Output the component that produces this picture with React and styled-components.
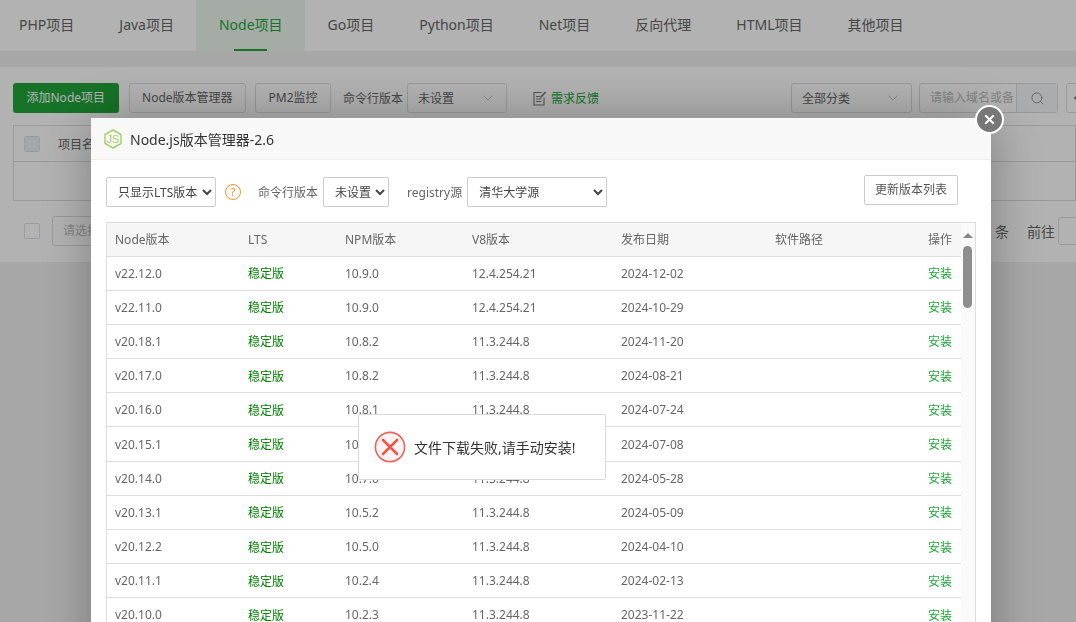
import React from 'react';
import styled, {createGlobalStyle} from 'styled-components';
import {ChevronDown, Search, X, ArrowLeft} from 'lucide-react';

const GlobalStyle = createGlobalStyle`
    html, body {
        margin: 0;
        height: 622px;
        overflow: hidden;
        background: #f0f0f0;
        font-family: "Noto Sans", "Noto Sans CJK SC", sans-serif;
        color: #666;
    }
    * {
        box-sizing: border-box;
    }
`

const tabs = ['PHP项目', 'Java项目', 'Node项目', 'Go项目', 'Python项目', 'Net项目', '反向代理', 'HTML项目', '其他项目'];

const versions = [
    ['v22.12.0', '10.9.0', '12.4.254.21', '2024-12-02'],
    ['v22.11.0', '10.9.0', '12.4.254.21', '2024-10-29'],
    ['v20.18.1', '10.8.2', '11.3.244.8', '2024-11-20'],
    ['v20.17.0', '10.8.2', '11.3.244.8', '2024-08-21'],
    ['v20.16.0', '10.8.1', '11.3.244.8', '2024-07-24'],
    ['v20.15.1', '10.7.0', '11.3.244.8', '2024-07-08'],
    ['v20.14.0', '10.7.0', '11.3.244.8', '2024-05-28'],
    ['v20.13.1', '10.5.2', '11.3.244.8', '2024-05-09'],
    ['v20.12.2', '10.5.0', '11.3.244.8', '2024-04-10'],
    ['v20.11.1', '10.2.4', '11.3.244.8', '2024-02-13'],
    ['v20.10.0', '10.2.3', '11.3.244.8', '2023-11-22'],
];

const NodeLogo = () => (
    <svg width="18" height="20" viewBox="0 0 18 20">
        <path d="M9 1 L17 5.5 V14.5 L9 19 L1 14.5 V5.5 Z" fill="none" stroke="#a5d06f" strokeWidth="1.5" strokeLinejoin="round"/>
        <text x="9" y="14" textAnchor="middle" fontSize="11" fill="#a5d06f" fontFamily="Liberation Sans, sans-serif">JS</text>
    </svg>
);

const ErrorIcon = () => (
    <svg width="32" height="32" viewBox="0 0 32 32">
        <circle cx="16" cy="16" r="14.6" fill="#fdf3f2" stroke="#e9665c" strokeWidth="1.6"/>
        <path d="M9 9 L23 23 M23 9 L9 23" stroke="#e8564c" strokeWidth="2.6" strokeLinecap="round"/>
    </svg>
);

const FeedbackIcon = () => (
    <svg width="14" height="15" viewBox="0 0 14 15" fill="none" stroke="#777" strokeWidth="1.1">
        <path d="M11 6.5 V14 H1 V1.5 H8.5"/>
        <path d="M3 5.5 H7 M3 8 H8.5 M3 10.5 H8.5"/>
        <path d="M7.5 6.5 L12.6 1" strokeWidth="1.6"/>
    </svg>
);

const App = () => {
    return (
        <>
            <GlobalStyle/>
            <Page>
                <TabBar>
                    {tabs.map(tab => (
                        <Tab key={tab} $active={tab === 'Node项目'}>{tab}</Tab>
                    ))}
                </TabBar>
                <Panel>
                    <Toolbar>
                        <GreenButton>添加Node项目</GreenButton>
                        <GhostButton>Node版本管理器</GhostButton>
                        <GhostButton>PM2监控</GhostButton>
                        <ToolLabel>命令行版本</ToolLabel>
                        <FakeSelect $width={100}>未设置<ChevronDown size={16} strokeWidth={1} color="#aaa"/></FakeSelect>
                        <Feedback>
                            <FeedbackIcon/>
                            <span>需求反馈</span>
                        </Feedback>
                        <ToolRight>
                            <FakeSelect $width={121}>全部分类<ChevronDown size={16} strokeWidth={1} color="#aaa"/></FakeSelect>
                            <SearchBox>
                                <SearchInput>请输入域名或备</SearchInput>
                                <SearchBtn><Search size={15} strokeWidth={1.2} color="#777"/></SearchBtn>
                            </SearchBox>
                            <EdgeButton><ArrowLeft size={14} color="#666"/></EdgeButton>
                        </ToolRight>
                    </Toolbar>
                    <BackTable>
                        <BackHead>
                            <Check $tint/>
                            <span>项目名称</span>
                        </BackHead>
                        <BackEmpty/>
                    </BackTable>
                    <Pager>
                        <Check/>
                        <BatchSelect>请选择批量操作</BatchSelect>
                        <PagerRight>
                            <span>共 0 条</span>
                            <span>前往</span>
                            <PageInput/>
                        </PagerRight>
                    </Pager>
                </Panel>
            </Page>

            <Shade/>

            <Dialog>
                <DialogTitle>
                    <NodeLogo/>
                    <span>Node.js版本管理器-2.6</span>
                </DialogTitle>
                <CloseButton><X size={15} strokeWidth={3.2} color="#fff"/></CloseButton>
                <DialogBody>
                    <Filters>
                        <NativeSelect $width={110}>
                            <option>只显示LTS版本</option>
                        </NativeSelect>
                        <Help>?</Help>
                        <FilterLabel $left={17}>命令行版本</FilterLabel>
                        <NativeSelect $width={66}>
                            <option>未设置</option>
                        </NativeSelect>
                        <FilterLabel $left={18}>registry源</FilterLabel>
                        <NativeSelect $width={140}>
                            <option>清华大学源</option>
                        </NativeSelect>
                        <RefreshButton>更新版本列表</RefreshButton>
                    </Filters>
                    <TableBox>
                        <VersionTable>
                            <colgroup>
                                <col width="133"/>
                                <col width="97"/>
                                <col width="127"/>
                                <col width="149"/>
                                <col width="154"/>
                                <col width="100"/>
                                <col/>
                            </colgroup>
                            <thead>
                                <tr>
                                    <Th>Node版本</Th>
                                    <Th>LTS</Th>
                                    <Th>NPM版本</Th>
                                    <Th>V8版本</Th>
                                    <Th>发布日期</Th>
                                    <Th>软件路径</Th>
                                    <Th $right>操作</Th>
                                </tr>
                            </thead>
                            <tbody>
                                {versions.map(v => (
                                    <tr key={v[0]}>
                                        <Td>{v[0]}</Td>
                                        <Td><Stable>稳定版</Stable></Td>
                                        <Td>{v[1]}</Td>
                                        <Td>{v[2]}</Td>
                                        <Td>{v[3]}</Td>
                                        <Td/>
                                        <Td $right><Install>安装</Install></Td>
                                    </tr>
                                ))}
                            </tbody>
                        </VersionTable>
                        <ScrollRail>
                            <ScrollArrow/>
                            <ScrollThumb/>
                        </ScrollRail>
                    </TableBox>
                </DialogBody>
            </Dialog>

            <Toast>
                <ErrorIcon/>
                <span>文件下载失败,请手动安装!</span>
            </Toast>
        </>
    );
};

export default App;

const Page = styled.div`
    height: 622px;
    display: flex;
    flex-direction: column;
    gap: 16px;
`

const TabBar = styled.div`
    height: 51px;
    flex: none;
    display: flex;
    background: #fff;
    margin-left: -3.5px;
`

const Tab = styled.div`
    position: relative;
    height: 51px;
    padding: 0 22.5px;
    font-size: 14px;
    line-height: 50px;
    white-space: nowrap;
    color: ${props => props.$active ? '#20a53a' : '#666'};
    background: ${props => props.$active ? '#edf7ee' : 'transparent'};
    &::after {
        content: "";
        display: ${props => props.$active ? 'block' : 'none'};
        position: absolute;
        left: 38px;
        right: 38px;
        bottom: 0;
        height: 2px;
        background: #20a53a;
    }
`

const Panel = styled.div`
    height: 195px;
    background: #fff;
    padding: 16px 0 0 13px;
`

const Toolbar = styled.div`
    display: flex;
    align-items: center;
    height: 30px;
`

const GreenButton = styled.div`
    height: 30px;
    line-height: 29px;
    padding: 0 13.5px;
    border-radius: 3px;
    background: #20a53a;
    color: #fff;
    font-size: 12px;
    white-space: nowrap;
    margin-right: 10px;
`

const GhostButton = styled.div`
    height: 30px;
    line-height: 28px;
    padding: 0 12.5px;
    border: 1px solid #ddd;
    border-radius: 3px;
    font-size: 12px;
    white-space: nowrap;
    margin-right: 9px;
`

const ToolLabel = styled.div`
    font-size: 12px;
    margin: 0 4px 0 3px;
    white-space: nowrap;
`

const FakeSelect = styled.div`
    width: ${props => props.$width}px;
    height: 30px;
    border: 1px solid #ddd;
    border-radius: 3px;
    display: flex;
    align-items: center;
    justify-content: space-between;
    padding: 0 10px;
    font-size: 12px;
`

const Feedback = styled.div`
    display: flex;
    align-items: center;
    gap: 4px;
    margin-left: 26px;
    font-size: 12px;
    color: #20a53a;
`

const ToolRight = styled.div`
    margin-left: auto;
    display: flex;
    align-items: center;
    gap: 8px;
`

const SearchBox = styled.div`
    display: flex;
    width: 139px;
    height: 30px;
    margin-left: -1px;
    border: 1px solid #ddd;
    border-radius: 3px;
`

const SearchInput = styled.div`
    flex: 1;
    overflow: hidden;
    white-space: nowrap;
    padding: 0 10px;
    font-size: 12px;
    line-height: 28px;
    color: #bbb;
    border-right: 1px solid #ddd;
`

const SearchBtn = styled.div`
    width: 40px;
    display: flex;
    align-items: center;
    justify-content: center;
    background: #f5f7fa;
`

const EdgeButton = styled.div`
    width: 30px;
    height: 30px;
    flex: none;
    display: flex;
    align-items: center;
    padding-left: 5px;
    border: 1px solid #ddd;
    border-radius: 3px;
    margin-right: -20px;
`

const BackTable = styled.div`
    margin-top: 12px;
    border: 1px solid #ddd;
    font-size: 12px;
`

const BackHead = styled.div`
    height: 36px;
    display: flex;
    align-items: center;
    gap: 18px;
    padding-left: 10px;
    border-bottom: 1px solid #ddd;
    background: #fff;
`

const BackEmpty = styled.div`
    height: 38px;
`

const Check = styled.div`
    width: 16px;
    height: 16px;
    flex: none;
    border: 1px solid #dcdfe6;
    border-radius: 2px;
    background: ${props => props.$tint ? '#e8edf5' : '#fff'};
`

const Pager = styled.div`
    display: flex;
    align-items: center;
    height: 30px;
    margin: 15px 0 0 11px;
    gap: 12px;
    font-size: 12px;
`

const BatchSelect = styled.div`
    width: 120px;
    height: 30px;
    line-height: 28px;
    padding-left: 10px;
    border: 1px solid #ddd;
    border-radius: 3px;
    color: #bbb;
`

const PagerRight = styled.div`
    margin-left: auto;
    margin-right: -22px;
    display: flex;
    align-items: center;
    gap: 18px;
    font-size: 14px;
    white-space: nowrap;
`

const PageInput = styled.div`
    width: 40px;
    height: 28px;
    border: 1px solid #ddd;
    border-radius: 3px;
    margin-left: -15px;
`

const Shade = styled.div`
    position: fixed;
    inset: 0;
    background: rgba(0, 0, 0, 0.3);
`

const Dialog = styled.div`
    position: fixed;
    left: 91px;
    top: 118px;
    width: 900px;
    height: 620px;
    background: #fff;
    box-shadow: 1px 1px 50px rgba(0, 0, 0, 0.3);
`

const DialogTitle = styled.div`
    height: 42px;
    display: flex;
    align-items: center;
    gap: 8px;
    padding-left: 13px;
    background: #f8f8f8;
    border-bottom: 1px solid #eee;
    font-size: 14px;
    color: #333;
`

const CloseButton = styled.div`
    position: absolute;
    right: -13px;
    top: -13px;
    width: 29px;
    height: 29px;
    border-radius: 50%;
    background: #777;
    border: 2px solid #fff;
    display: flex;
    align-items: center;
    justify-content: center;
`

const DialogBody = styled.div`
    padding: 15px 15px 0;
`

const Filters = styled.div`
    display: flex;
    align-items: center;
    height: 34px;
`

const NativeSelect = styled.select`
    width: ${props => props.$width}px;
    height: 30px;
    padding-left: 7px;
    border: 1px solid #ccc;
    border-radius: 2px;
    background: #fff;
    color: #444;
    font-family: inherit;
    font-size: 12px;
`

const Help = styled.div`
    width: 16px;
    height: 16px;
    margin-left: 9px;
    border: 1px solid #f39221;
    border-radius: 50%;
    color: #f39221;
    font-size: 11px;
    line-height: 14px;
    text-align: center;
`

const FilterLabel = styled.div`
    font-size: 12px;
    margin: 0 5px 0 ${props => props.$left}px;
    white-space: nowrap;
`

const RefreshButton = styled.div`
    margin-left: auto;
    margin-right: 18px;
    margin-bottom: 4px;
    height: 30px;
    padding: 0 10px;
    border: 1px solid #ccc;
    border-radius: 2px;
    font-size: 12px;
    line-height: 28px;
    color: #555;
`

const TableBox = styled.div`
    position: relative;
    margin-top: 13px;
    width: 870px;
    border: 1px solid #ddd;
    border-bottom: 0;
    padding-right: 14px;
    height: 500px;
    overflow: hidden;
`

const VersionTable = styled.table`
    width: 100%;
    table-layout: fixed;
    border-collapse: collapse;
    font-size: 12px;
`

const Th = styled.th`
    height: 33px;
    padding: 0 ${props => props.$right ? 9 : 8}px 0 8px;
    background: #f6f6f6;
    border-bottom: 1px solid #ddd;
    font-weight: 400;
    text-align: ${props => props.$right ? 'right' : 'left'};
    color: #666;
`

const Td = styled.td`
    height: 34.2px;
    padding: 0 ${props => props.$right ? 9 : 8}px 0 8px;
    border-bottom: 1px solid #ddd;
    text-align: ${props => props.$right ? 'right' : 'left'};
    color: #666;
`

const Stable = styled.span`
    color: #008000;
`

const Install = styled.span`
    color: #20a53a;
`

const ScrollRail = styled.div`
    position: absolute;
    top: 0;
    right: 0;
    bottom: 0;
    width: 14px;
    background: #fafafa;
`

const ScrollArrow = styled.div`
    position: absolute;
    top: 10px;
    left: 2px;
    border-left: 5px solid transparent;
    border-right: 5px solid transparent;
    border-bottom: 5px solid #888;
`

const ScrollThumb = styled.div`
    position: absolute;
    top: 23px;
    left: 2px;
    width: 9px;
    height: 62px;
    border-radius: 5px;
    background: #8e8e8e;
`

const Toast = styled.div`
    position: fixed;
    left: 358px;
    top: 414px;
    width: 248px;
    height: 66px;
    display: flex;
    align-items: center;
    gap: 8px;
    padding-left: 15px;
    background: #fff;
    border: 1px solid #d9d9d9;
    border-radius: 2px;
    font-size: 14px;
    color: #333;
    white-space: nowrap;
`
